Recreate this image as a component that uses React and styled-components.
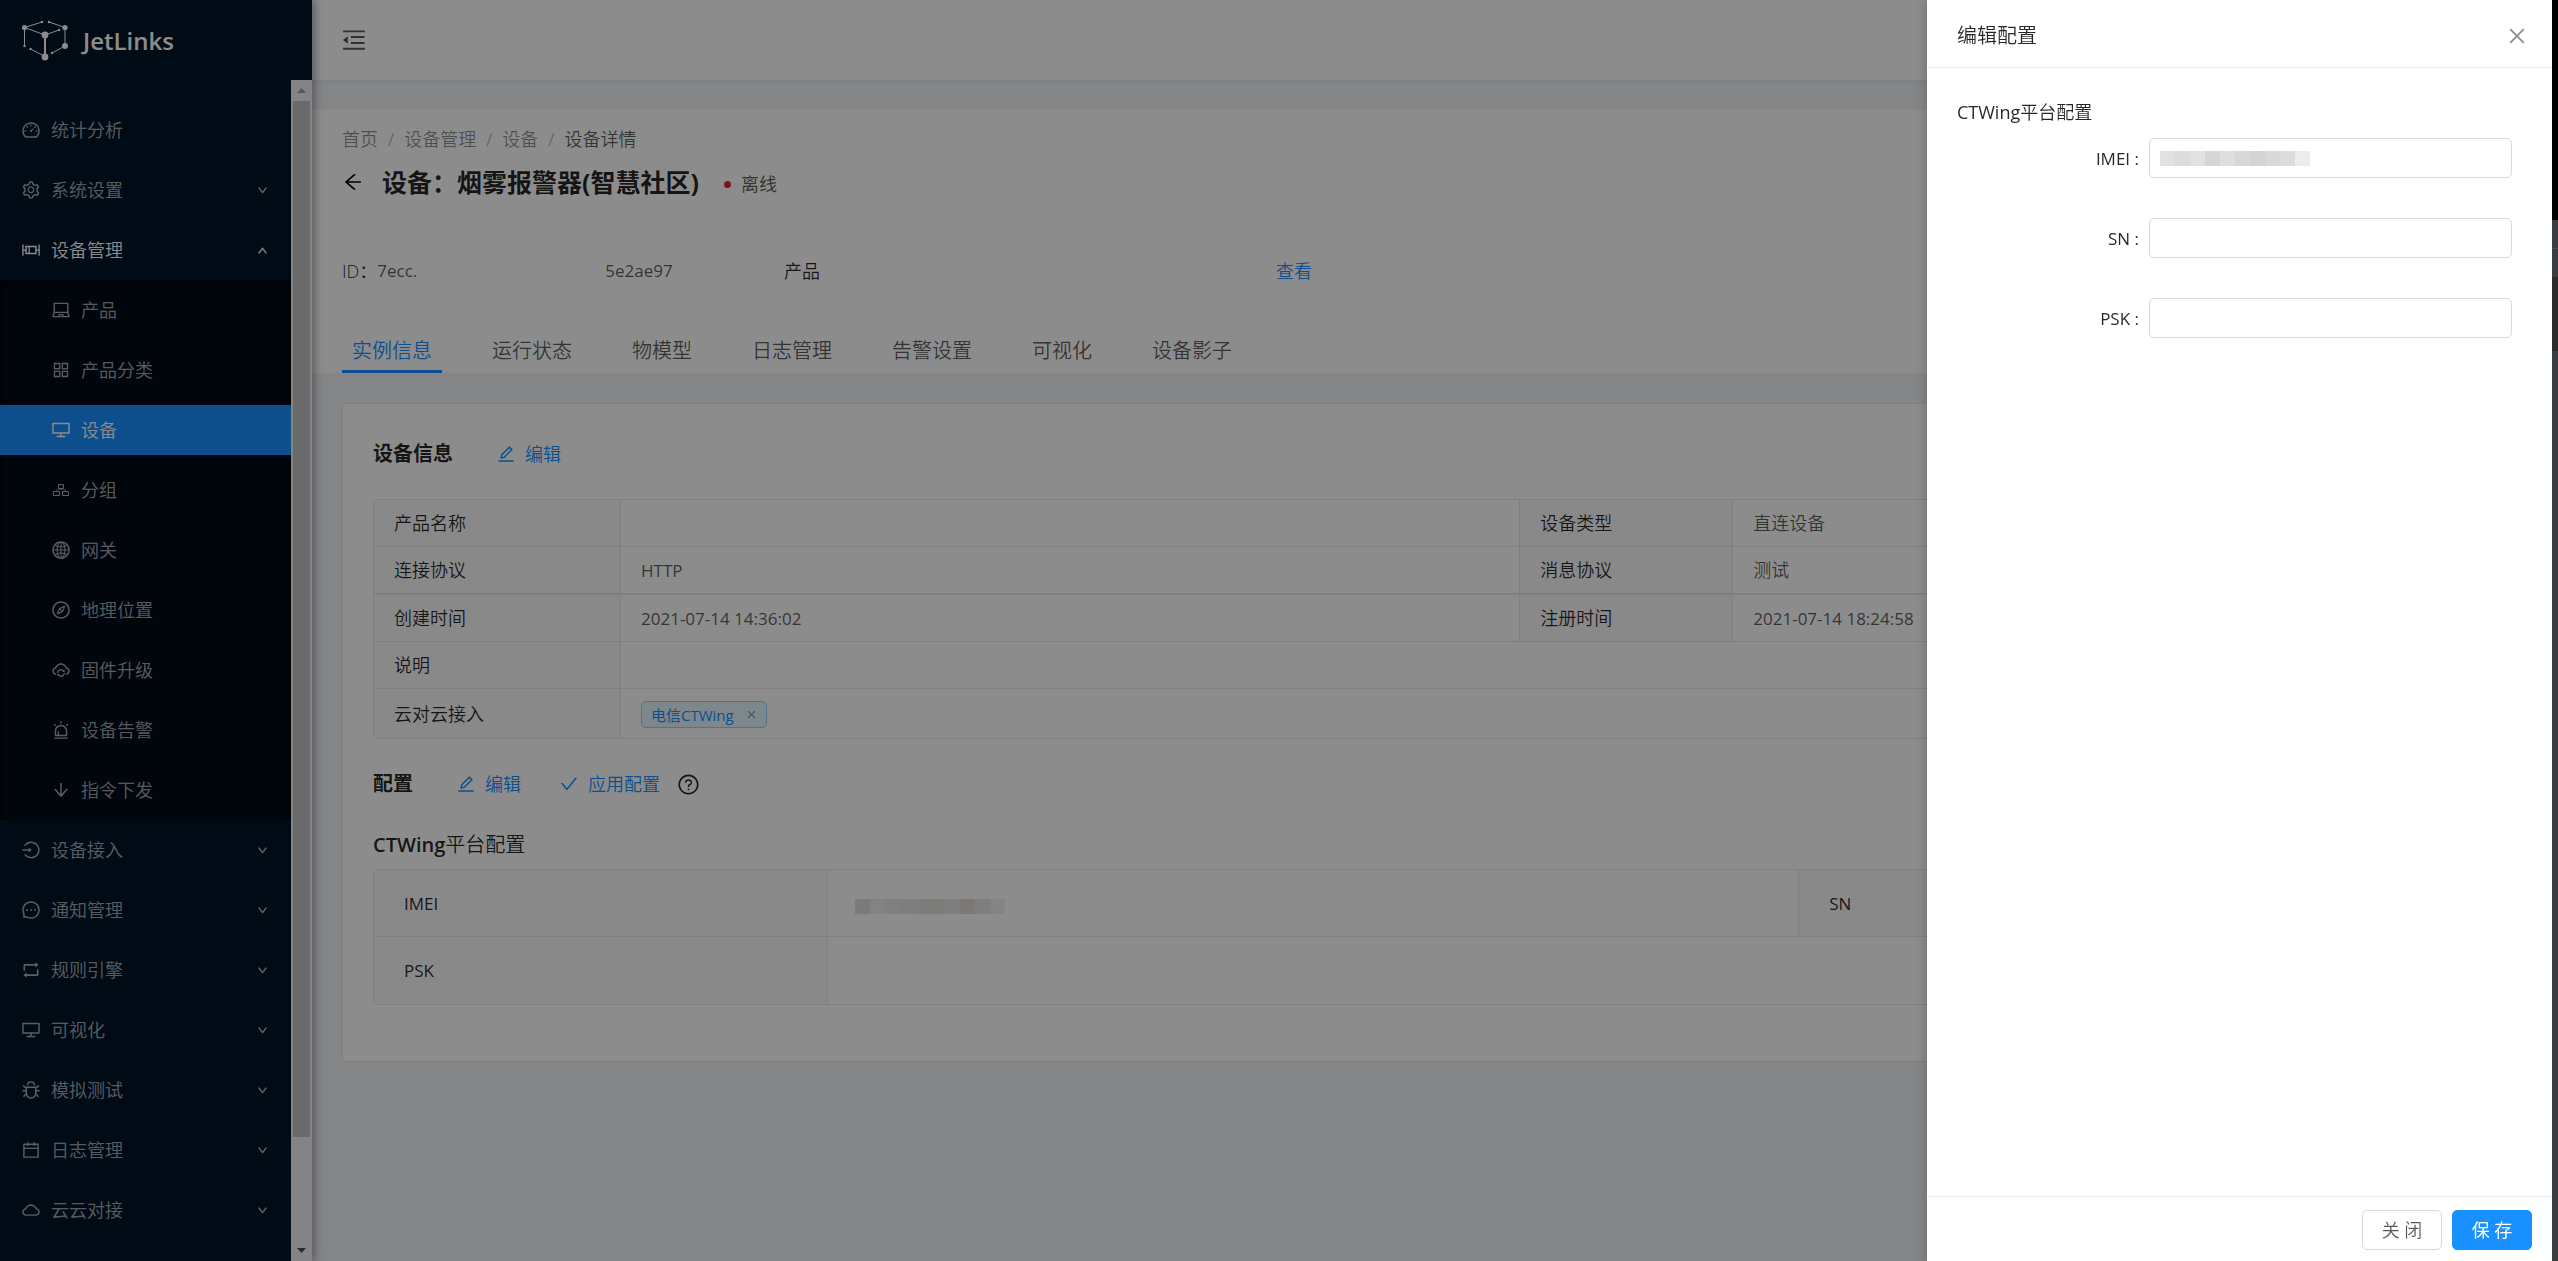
import React from 'react';
import styled, { createGlobalStyle } from 'styled-components';
import {
  AiOutlineAlert,
  AiOutlineAppstore,
  AiOutlineArrowDown,
  AiOutlineArrowLeft,
  AiOutlineBoxPlot,
  AiOutlineBug,
  AiOutlineCalendar,
  AiOutlineCheck,
  AiOutlineClose,
  AiOutlineCloud,
  AiOutlineCloudSync,
  AiOutlineCompass,
  AiOutlineDashboard,
  AiOutlineDesktop,
  AiOutlineDown,
  AiOutlineEdit,
  AiOutlineGlobal,
  AiOutlineLaptop,
  AiOutlineLogin,
  AiOutlineMenuFold,
  AiOutlineMessage,
  AiOutlineQuestionCircle,
  AiOutlineRetweet,
  AiOutlineSetting,
  AiOutlineUp
} from 'react-icons/ai';

const colors = {
  primary: '#1890ff',
  sider: '#001529',
  submenu: '#000c17',
  page: '#f0f2f5',
  border: '#e8e8e8',
  heading: 'rgba(0, 0, 0, 0.85)',
  text: 'rgba(0, 0, 0, 0.65)',
  muted: 'rgba(0, 0, 0, 0.45)'
};

const GlobalStyle = createGlobalStyle`
  *, *::before, *::after { box-sizing: border-box; }
  body {
    margin: 0;
    background: #3c3f41;
    color: ${colors.text};
    font-family: 'Open Sans', 'Noto Sans CJK SC', sans-serif;
    font-size: 18px;
    font-weight: 350;
    line-height: 28px;
  }
  a { color: ${colors.primary}; text-decoration: none; }
  button, input { font: inherit; }
  svg { flex: none; }
`;

const Screen = styled.div`
  display: flex;
  height: 100vh;
  overflow: hidden;
`;

const Layout = styled.div`
  display: flex;
  flex: 1;
  min-width: 0;
  background: ${colors.page};
`;

const Sider = styled.aside`
  display: flex;
  flex-direction: column;
  flex: none;
  width: 312px;
  background: ${colors.sider};
  box-shadow: 3px 0 8px rgba(0, 21, 41, 0.35);
  z-index: 1;
`;

const Logo = styled.a`
  display: flex;
  align-items: center;
  gap: 14px;
  flex: none;
  height: 80px;
  padding: 2px 0 0 21px;
  color: #fff;
  font-size: 24px;
  font-weight: 600;
`;

const MenuScroll = styled.div`
  display: flex;
  flex: 1;
  min-height: 0;
`;

const Menu = styled.nav`
  flex: 1;
  padding-top: 20px;
  overflow: hidden;
`;

const SubMenu = styled.div`
  background: ${colors.submenu};
  box-shadow: inset 0 3px 10px rgba(0, 0, 0, 0.45);
`;

const MenuItem = styled.a`
  display: flex;
  align-items: center;
  gap: 10px;
  height: 50px;
  margin: 5px 0;
  padding: 0 23px 0 ${(props) => (props.$nested ? 51 : 21)}px;
  background: ${(props) => (props.$selected ? colors.primary : 'transparent')};
  color: ${(props) => (props.$selected || props.$open ? '#fff' : 'rgba(255, 255, 255, 0.65)')};
`;

const ItemLabel = styled.span`
  flex: 1;
`;

const ItemGroup = styled.div`
  display: flow-root;
`;

const Scrollbar = styled.div`
  display: flex;
  flex-direction: column;
  width: 21px;
  background: #f1f1f1;
`;

const ScrollArrow = styled.div`
  display: flex;
  align-items: center;
  justify-content: center;
  height: 21px;
  color: ${(props) => (props.$disabled ? '#a3a3a3' : '#505050')};
`;

const ScrollTrack = styled.div`
  flex: 1;
  padding: 0 2px;
`;

const ScrollThumb = styled.div`
  height: 91%;
  background: #c1c1c1;
`;

const Main = styled.main`
  display: flex;
  flex-direction: column;
  flex: 1;
  min-width: 0;
`;

const TopBar = styled.header`
  display: flex;
  align-items: center;
  flex: none;
  height: 80px;
  padding: 0 28px;
  background: #fff;
  box-shadow: 0 1px 5px rgba(0, 21, 41, 0.08);
`;

const IconButton = styled.button`
  display: flex;
  padding: 0;
  border: none;
  background: none;
  color: ${(props) => props.$color || colors.text};
  cursor: pointer;
`;

const PageHeader = styled.section`
  margin-top: 30px;
  padding: 15px 30px 0;
  background: #fff;
`;

const Breadcrumb = styled.nav`
  display: flex;
  gap: 10px;
  color: ${colors.muted};

  a {
    color: ${colors.muted};
  }
`;

const Crumb = styled.span`
  color: ${colors.text};
`;

const TitleRow = styled.div`
  display: flex;
  align-items: center;
  gap: 18px;
  margin-top: 10px;
`;

const PageTitle = styled.h1`
  margin: 0;
  color: ${colors.heading};
  font-size: 25px;
  font-weight: 700;
  line-height: 38px;
`;

const Status = styled.span`
  display: flex;
  align-items: center;
  gap: 10px;
  padding: 4px 0 0 7px;
  font-weight: 400;

  &::before {
    content: '';
    width: 7px;
    height: 7px;
    border-radius: 50%;
    background: #f5222d;
  }
`;

const Summary = styled.div`
  display: flex;
  margin-top: 56px;
`;

const SummaryItem = styled.div`
  display: flex;
  width: ${(props) => props.$width}px;
`;

const SummaryLabel = styled.span`
  color: ${colors.heading};
`;

const Gap = styled.span`
  width: ${(props) => props.$width}px;
`;

const Tabs = styled.div`
  display: flex;
  gap: 40px;
  margin-top: 43px;
`;

const Tab = styled.button`
  height: 45px;
  padding: 3px 10px 0;
  border: none;
  border-bottom: 3px solid ${(props) => (props.$active ? colors.primary : 'transparent')};
  background: none;
  color: ${(props) => (props.$active ? colors.primary : colors.text)};
  font-size: 20px;
`;

const Card = styled.section`
  margin: 30px;
  padding: 30px 30px 56px;
  border: 1px solid ${colors.border};
  border-radius: 2px;
  background: #fff;
`;

const SectionHead = styled.div`
  display: flex;
  align-items: center;
  gap: 38px;
  height: 40px;
  margin-top: ${(props) => props.$top || 0}px;
`;

const SectionTitle = styled.h2`
  margin: 0 5px 0 0;
  color: ${colors.heading};
  font-size: 20px;
  font-weight: 700;
`;

const Action = styled.a`
  display: flex;
  align-items: center;
  gap: 9px;
`;

const ActionGroup = styled.div`
  display: flex;
  align-items: center;
  gap: 17px;
  color: ${colors.heading};
`;

const ConfigTitle = styled.h3`
  margin: ${(props) => props.$margin};
  color: ${colors.heading};
  font-size: ${(props) => props.$size}px;
  font-weight: 350;
  line-height: 30px;
`;

const Medium = styled.span`
  font-weight: ${(props) => props.$weight || 500};
`;

const TableFrame = styled.div`
  margin-top: ${(props) => props.$top || 0}px;
  border: 1px solid ${colors.border};
  border-radius: 5px;
  overflow: hidden;
`;

const Table = styled.table`
  width: 100%;
  border-spacing: 0;
  table-layout: fixed;

  th,
  td {
    height: ${(props) => props.$row}px;
    padding: 0 ${(props) => props.$pad}px;
    border-right: 1px solid ${colors.border};
    border-bottom: 1px solid ${colors.border};
    text-align: left;
  }
  th {
    background: #fafafa;
    color: ${colors.heading};
    font-weight: 350;
  }
  td:last-child {
    border-right: none;
  }
  tr:last-child > * {
    height: ${(props) => props.$lastRow || props.$row}px;
    border-bottom: none;
  }
`;

// the date row is separated by a heavier rule
const DateRow = styled.tr`
  && > * {
    height: 48px;
    border-top: 1px solid ${colors.border};
  }
`;

const Col = styled.col`
  width: ${(props) => props.$width};
`;

const Latin = styled.span`
  font-size: 17px;
  font-weight: 400;
`;

const Tag = styled.span`
  display: inline-flex;
  align-items: center;
  gap: 12px;
  height: 27px;
  padding: 0 9px;
  border: 1px solid #91d5ff;
  border-radius: 5px;
  background: #e6f7ff;
  color: ${colors.primary};
  font-size: 15px;
  font-weight: 400;
  vertical-align: middle;
`;

const Mosaic = styled.span`
  display: flex;
  width: 150px;
  height: 15px;
`;

const MosaicTile = styled.span`
  flex: 1;
  background: ${(props) => props.$color};
`;

const MaskedCell = styled.td`
  && {
    padding: 6px 0 0 27px;
  }
`;

const Mask = styled.div`
  position: fixed;
  inset: 0 6px 0 0;
  z-index: 2;
  background: rgba(0, 0, 0, 0.45);
`;

const Drawer = styled.aside`
  position: fixed;
  inset: 0 6px 0 auto;
  z-index: 3;
  display: flex;
  flex-direction: column;
  width: 625px;
  background: #fff;
  box-shadow: -3px 0 10px rgba(0, 0, 0, 0.15);
`;

const DrawerHead = styled.div`
  display: flex;
  align-items: center;
  justify-content: space-between;
  height: 68px;
  padding: 4px 24px 0 30px;
  border-bottom: 1px solid ${colors.border};
`;

const DrawerTitle = styled.h2`
  margin: 0;
  color: ${colors.heading};
  font-size: 20px;
  font-weight: 350;
`;

const DrawerBody = styled.form`
  flex: 1;
  padding: 29px 40px 30px 30px;
`;

const Field = styled.div`
  display: grid;
  grid-template-columns: 182px 1fr;
  align-items: center;
  gap: 10px;
  margin-bottom: 40px;
`;

const FieldLabel = styled.label`
  color: ${colors.heading};
  text-align: right;
`;

const FieldControl = styled.div`
  display: grid;
  align-items: center;

  > * {
    grid-area: 1 / 1;
  }
  > span {
    margin-left: 11px;
  }
`;

const Input = styled.input`
  width: 100%;
  height: 40px;
  padding: 0 14px;
  border: 1px solid #d9d9d9;
  border-radius: 5px;
  background: #fff;
  outline: none;
`;

const DrawerFoot = styled.div`
  display: flex;
  justify-content: flex-end;
  gap: 10px;
  padding: 13px 20px 11px;
  border-top: 1px solid ${colors.border};
`;

const Button = styled.button`
  width: 80px;
  height: 40px;
  padding: 0;
  border: 1px solid ${(props) => (props.$primary ? colors.primary : '#d9d9d9')};
  border-radius: 5px;
  background: ${(props) => (props.$primary ? colors.primary : '#fff')};
  color: ${(props) => (props.$primary ? '#fff' : colors.text)};
  font-weight: ${(props) => (props.$primary ? 400 : 350)};
`;

const Edge = styled.div`
  flex: none;
  width: 6px;
  background: linear-gradient(
    #000 220px,
    #3c3f41 220px 248px,
    #505355 248px 249px,
    #3c3f41 249px 277px,
    #2b2d2e 277px 351px,
    #3c3f41 351px
  );
`;

function GroupIcon() {
  return (
    <svg width="20" height="20" viewBox="0 0 20 20" fill="none" stroke="currentColor">
      <path d="M7.5 4.5h5v4h-5zM2.5 11.5h6v4h-6zM11.5 11.5h6v4h-6z" />
      <path d="M10 8.5v1M5.5 11.500v-2h9v2" strokeOpacity="0.5" />
    </svg>
  );
}

function LogoMark() {
  return (
    <svg width="48" height="42" viewBox="0 0 48 42" stroke="currentColor" fill="currentColor">
      <path d="M3.5 7.5 21 2M3.5 7.5V26M44 7.5 28 2M44 7.5V26M3.5 7.5 24 15l14-5M9.5 29 24 36.5M31 33l13-7" fill="none" />
      <path d="M24 15v22" strokeWidth="2" />
      <g stroke="none">
        <circle cx="3.5" cy="7.5" r="2.6" />
        <circle cx="44" cy="7.5" r="2.6" />
        <circle cx="24" cy="15" r="3.4" />
        <circle cx="44" cy="26" r="3" />
        <circle cx="24" cy="37" r="3.4" />
        <circle cx="21" cy="2" r="1.2" />
        <circle cx="28" cy="2" r="1.2" />
        <circle cx="38" cy="10" r="1.2" />
        <circle cx="3.5" cy="26" r="1.2" />
        <circle cx="9.5" cy="29" r="1.2" />
        <circle cx="31" cy="33" r="1.2" />
      </g>
    </svg>
  );
}

const menu = [
  { label: '统计分析', icon: AiOutlineDashboard, leaf: true },
  { label: '系统设置', icon: AiOutlineSetting },
  {
    label: '设备管理',
    icon: AiOutlineBoxPlot,
    children: [
      { label: '产品', icon: AiOutlineLaptop },
      { label: '产品分类', icon: AiOutlineAppstore },
      { label: '设备', icon: AiOutlineDesktop, selected: true },
      { label: '分组', icon: GroupIcon },
      { label: '网关', icon: AiOutlineGlobal },
      { label: '地理位置', icon: AiOutlineCompass },
      { label: '固件升级', icon: AiOutlineCloudSync },
      { label: '设备告警', icon: AiOutlineAlert },
      { label: '指令下发', icon: AiOutlineArrowDown }
    ]
  },
  { label: '设备接入', icon: AiOutlineLogin },
  { label: '通知管理', icon: AiOutlineMessage },
  { label: '规则引擎', icon: AiOutlineRetweet },
  { label: '可视化', icon: AiOutlineDesktop },
  { label: '模拟测试', icon: AiOutlineBug },
  { label: '日志管理', icon: AiOutlineCalendar },
  { label: '云云对接', icon: AiOutlineCloud }
];

const tabs = ['实例信息', '运行状态', '物模型', '日志管理', '告警设置', '可视化', '设备影子'];

const fields = ['IMEI', 'SN', 'PSK'];

const tableTiles = ['#e3e1df', '#eeeeee', '#eaeaea', '#e6e6e6', '#e4e4e2', '#e3e3df', '#e6e6e6', '#e2dbd7', '#e8e8e8', '#f1f1f1'];
const inputTiles = ['#e1e1e1', '#dcdcdc', '#e1e1e1', '#d6d6d6', '#dedede', '#d8d8d8', '#d4d4d4', '#d9d9d9', '#dcdcdc', '#ececec'];

function MaskedValue({ tiles }) {
  return (
    <Mosaic>
      {tiles.map((color, index) => (
        <MosaicTile key={index} $color={color} />
      ))}
    </Mosaic>
  );
}

function SideMenu() {
  return (
    <Menu>
      {menu.map(({ label, icon: Icon, leaf, children }) => (
        <ItemGroup key={label}>
          <MenuItem href="#" $open={Boolean(children)}>
            <Icon size={20} />
            <ItemLabel>{label}</ItemLabel>
            {!leaf && (children ? <AiOutlineUp size={11} strokeWidth={50} /> : <AiOutlineDown size={11} strokeWidth={50} />)}
          </MenuItem>
          {children && (
            <SubMenu>
              {children.map(({ label: name, icon: ChildIcon, selected }) => (
                <ItemGroup key={name}>
                  <MenuItem href="#" $nested $selected={selected}>
                    <ChildIcon size={20} />
                    <ItemLabel>{name}</ItemLabel>
                  </MenuItem>
                </ItemGroup>
              ))}
            </SubMenu>
          )}
        </ItemGroup>
      ))}
    </Menu>
  );
}

function DeviceHeader() {
  return (
    <PageHeader>
      <Breadcrumb>
        <a href="#">首页</a>/<a href="#">设备管理</a>/<a href="#">设备</a>/<Crumb>设备详情</Crumb>
      </Breadcrumb>
      <TitleRow>
        <IconButton $color="#000" aria-label="返回">
          <AiOutlineArrowLeft size={22} />
        </IconButton>
        <PageTitle>设备：烟雾报警器(智慧社区)</PageTitle>
        <Status>离线</Status>
      </TitleRow>
      <Summary>
        <SummaryItem $width={442}>
          <SummaryLabel>ID：</SummaryLabel>
          <Latin>7ecc.</Latin>
          <Gap $width={188} />
          <Latin>5e2ae97</Latin>
        </SummaryItem>
        <SummaryItem $width={492}>
          <SummaryLabel>产品</SummaryLabel>
        </SummaryItem>
        <a href="#">查看</a>
      </Summary>
      <Tabs role="tablist">
        {tabs.map((name, index) => (
          <Tab key={name} role="tab" aria-selected={index === 0} $active={index === 0}>
            {name}
          </Tab>
        ))}
      </Tabs>
    </PageHeader>
  );
}

function DeviceInfo() {
  return (
    <Card>
      <SectionHead>
        <SectionTitle>设备信息</SectionTitle>
        <Action href="#">
          <AiOutlineEdit size={20} />
          编辑
        </Action>
      </SectionHead>
      <TableFrame $top={25}>
        <Table $row={47} $lastRow={49} $pad={20}>
          <colgroup>
            <Col $width="247px" />
            <Col $width="42.5%" />
            <Col $width="213px" />
            <Col />
          </colgroup>
          <tbody>
            <tr>
              <th>产品名称</th>
              <td />
              <th>设备类型</th>
              <td>直连设备</td>
            </tr>
            <tr>
              <th>连接协议</th>
              <td>
                <Latin>HTTP</Latin>
              </td>
              <th>消息协议</th>
              <td>测试</td>
            </tr>
            <DateRow>
              <th>创建时间</th>
              <td>
                <Latin>2021-07-14 14:36:02</Latin>
              </td>
              <th>注册时间</th>
              <td>
                <Latin>2021-07-14 18:24:58</Latin>
              </td>
            </DateRow>
            <tr>
              <th>说明</th>
              <td colSpan={3} />
            </tr>
            <tr>
              <th>云对云接入</th>
              <td colSpan={3}>
                <Tag>
                  电信CTWing
                  <AiOutlineClose size={11} />
                </Tag>
              </td>
            </tr>
          </tbody>
        </Table>
      </TableFrame>
      <SectionHead $top={25}>
        <SectionTitle>配置</SectionTitle>
        <Action href="#">
          <AiOutlineEdit size={20} />
          编辑
        </Action>
        <ActionGroup>
          <Action href="#">
            <AiOutlineCheck size={20} />
            应用配置
          </Action>
          <AiOutlineQuestionCircle size={23} />
        </ActionGroup>
      </SectionHead>
      <ConfigTitle $size={20} $margin="26px 0 9px">
        <Medium $weight={600}>CTWing</Medium>平台配置
      </ConfigTitle>
      <TableFrame>
        <Table $row={67} $pad={30}>
          <colgroup>
            <Col $width="454px" />
            <Col $width="45.9%" />
            <Col $width="454px" />
            <Col />
          </colgroup>
          <tbody>
            <tr>
              <th>
                <Latin>IMEI</Latin>
              </th>
              <MaskedCell>
                <MaskedValue tiles={tableTiles} />
              </MaskedCell>
              <th>
                <Latin>SN</Latin>
              </th>
              <td />
            </tr>
            <tr>
              <th>
                <Latin>PSK</Latin>
              </th>
              <td colSpan={3} />
            </tr>
          </tbody>
        </Table>
      </TableFrame>
    </Card>
  );
}

function ConfigDrawer() {
  return (
    <Drawer role="dialog" aria-label="编辑配置">
      <DrawerHead>
        <DrawerTitle>编辑配置</DrawerTitle>
        <IconButton $color={colors.muted} aria-label="关闭">
          <AiOutlineClose size={22} />
        </IconButton>
      </DrawerHead>
      <DrawerBody>
        <ConfigTitle $size={18} $margin="0 0 11px">
          <Medium>CTWing</Medium>平台配置
        </ConfigTitle>
        {fields.map((name) => (
          <Field key={name}>
            <FieldLabel htmlFor={name}>
              <Latin>{name} :</Latin>
            </FieldLabel>
            <FieldControl>
              <Input id={name} type="text" />
              {name === 'IMEI' && <MaskedValue tiles={inputTiles} />}
            </FieldControl>
          </Field>
        ))}
      </DrawerBody>
      <DrawerFoot>
        <Button type="button">关 闭</Button>
        <Button type="button" $primary>
          保 存
        </Button>
      </DrawerFoot>
    </Drawer>
  );
}

function App() {
  return (
    <Screen>
      <GlobalStyle />
      <Layout>
        <Sider>
          <Logo href="#">
            <LogoMark />
            JetLinks
          </Logo>
          <MenuScroll>
            <SideMenu />
            <Scrollbar aria-hidden="true">
              <ScrollArrow $disabled>
                <svg width="9" height="5">
                  <path d="M0 5h9L4.5 0z" fill="currentColor" />
                </svg>
              </ScrollArrow>
              <ScrollTrack>
                <ScrollThumb />
              </ScrollTrack>
              <ScrollArrow>
                <svg width="9" height="5">
                  <path d="M0 0h9L4.5 5z" fill="currentColor" />
                </svg>
              </ScrollArrow>
            </Scrollbar>
          </MenuScroll>
        </Sider>
        <Main>
          <TopBar>
            <IconButton aria-label="收起菜单">
              <AiOutlineMenuFold size={28} />
            </IconButton>
          </TopBar>
          <DeviceHeader />
          <DeviceInfo />
        </Main>
      </Layout>
      <Edge />
      <Mask />
      <ConfigDrawer />
    </Screen>
  );
}

export default App;
